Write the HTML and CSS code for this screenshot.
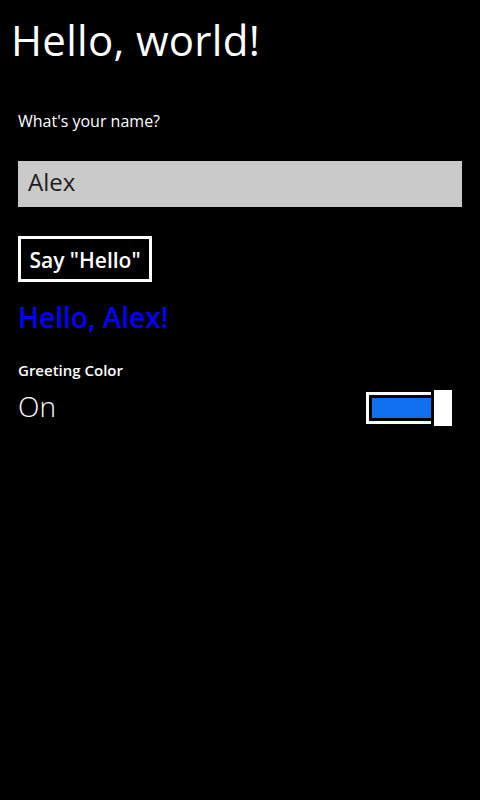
FILE: index.html
```html
<!DOCTYPE html>
<html lang="en">
<head>
<meta charset="utf-8">
<title>Hello, world!</title>
<link rel="stylesheet" href="styles.css">
</head>
<body>
<main class="page">
  <h1 class="title">Hello, world!</h1>
  <label class="label" for="name">What's your name?</label>
  <div class="textbox" id="name">Alex</div>
  <div class="btn-row"><button class="btn">Say "Hello"</button></div>
  <p class="greeting">Hello, Alex!</p>
  <div class="toggle-label">Greeting Color</div>
  <div class="toggle-row">
    <span class="toggle-state">On</span>
    <div class="switch">
      <div class="track"><div class="fill"></div></div>
      <div class="thumb"></div>
    </div>
  </div>
</main>
</body>
</html>
```
FILE: styles.css
```css
html, body {
  margin: 0;
  padding: 0;
  background: #000;
}
body {
  width: 480px;
  height: 800px;
  color: #fff;
  font-family: "Open Sans", "Noto Sans", sans-serif;
}
.page {
  display: flex;
  flex-direction: column;
  padding: 16px 18px 0 18px;
}
.title {
  margin: 0 0 0 -7px;
  font-size: 42px;
  font-weight: 400;
  letter-spacing: 0.3px;
  line-height: 48px;
}
.label {
  margin-top: 45px;
  font-size: 16px;
  line-height: 24px;
  font-weight: 400;
}
.textbox {
  margin-top: 28px;
  height: 46px;
  box-sizing: border-box;
  padding: 5px 10px 9px 10px;
  background: #cacaca;
  color: #1e1e1e;
  font-size: 24px;
  line-height: 32px;
}
.btn-row {
  display: flex;
  margin-top: 29px;
}
.btn {
  width: 134px;
  height: 46px;
  box-sizing: border-box;
  border: 3px solid #fff;
  background: #000;
  color: #fff;
  font-family: "Open Sans", "Noto Sans", sans-serif;
  font-size: 21px;
  font-weight: 600;
  line-height: 39px;
  padding: 2px 0 0 0;
  text-align: center;
}
.greeting {
  margin: 17px 0 0 0;
  color: #0000ff;
  font-size: 28px;
  font-weight: 600;
  line-height: 36px;
}
.toggle-label {
  margin-top: 24px;
  font-size: 15px;
  font-weight: 600;
  line-height: 22px;
}
.toggle-row {
  margin-top: 9px;
  display: flex;
  justify-content: space-between;
  align-items: flex-start;
  padding-right: 10px;
}
.toggle-state {
  font-size: 28px;
  font-weight: 300;
  line-height: 32px;
}
.switch {
  display: flex;
  align-items: center;
  gap: 3px;
}
.track {
  width: 65px;
  height: 32px;
  box-sizing: border-box;
  border: 3px solid #fff;
  border-right: none;
  padding: 3px 0 3px 3px;
  display: flex;
}
.fill {
  flex: 1;
  background: #1170f0;
}
.thumb {
  width: 18px;
  height: 36px;
  background: #fff;
}
```
